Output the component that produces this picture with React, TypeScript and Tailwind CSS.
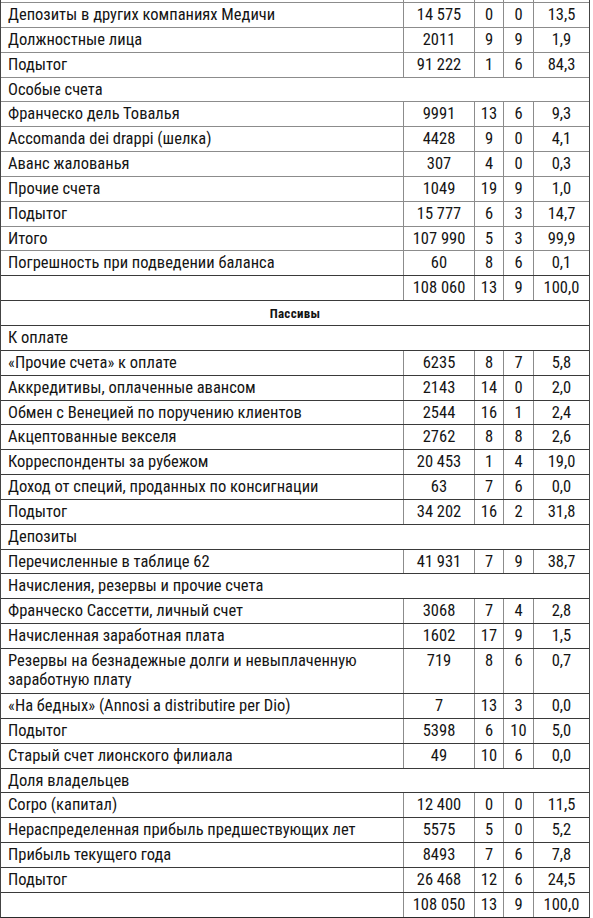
type Row =
  | { kind: 'item'; label: string; values: [string, string, string, string]; tall?: boolean }
  | { kind: 'section'; label: string }
  | { kind: 'header'; label: string };

const rows: Row[] = [
  { kind: 'item', label: 'Депозиты в других компаниях Медичи', values: ['14 575', '0', '0', '13,5'] },
  { kind: 'item', label: 'Должностные лица', values: ['2011', '9', '9', '1,9'] },
  { kind: 'item', label: 'Подытог', values: ['91 222', '1', '6', '84,3'] },
  { kind: 'section', label: 'Особые счета' },
  { kind: 'item', label: 'Франческо дель Товалья', values: ['9991', '13', '6', '9,3'] },
  { kind: 'item', label: 'Accomanda dei drappi (шелка)', values: ['4428', '9', '0', '4,1'] },
  { kind: 'item', label: 'Аванс жалованья', values: ['307', '4', '0', '0,3'] },
  { kind: 'item', label: 'Прочие счета', values: ['1049', '19', '9', '1,0'] },
  { kind: 'item', label: 'Подытог', values: ['15 777', '6', '3', '14,7'] },
  { kind: 'item', label: 'Итого', values: ['107 990', '5', '3', '99,9'] },
  { kind: 'item', label: 'Погрешность при подведении баланса', values: ['60', '8', '6', '0,1'] },
  { kind: 'item', label: '', values: ['108 060', '13', '9', '100,0'] },
  { kind: 'header', label: 'Пассивы' },
  { kind: 'section', label: 'К оплате' },
  { kind: 'item', label: '«Прочие счета» к оплате', values: ['6235', '8', '7', '5,8'] },
  { kind: 'item', label: 'Аккредитивы, оплаченные авансом', values: ['2143', '14', '0', '2,0'] },
  { kind: 'item', label: 'Обмен с Венецией по поручению клиентов', values: ['2544', '16', '1', '2,4'] },
  { kind: 'item', label: 'Акцептованные векселя', values: ['2762', '8', '8', '2,6'] },
  { kind: 'item', label: 'Корреспонденты за рубежом', values: ['20 453', '1', '4', '19,0'] },
  { kind: 'item', label: 'Доход от специй, проданных по консигнации', values: ['63', '7', '6', '0,0'] },
  { kind: 'item', label: 'Подытог', values: ['34 202', '16', '2', '31,8'] },
  { kind: 'section', label: 'Депозиты' },
  { kind: 'item', label: 'Перечисленные в таблице 62', values: ['41 931', '7', '9', '38,7'] },
  { kind: 'section', label: 'Начисления, резервы и прочие счета' },
  { kind: 'item', label: 'Франческо Сассетти, личный счет', values: ['3068', '7', '4', '2,8'] },
  { kind: 'item', label: 'Начисленная заработная плата', values: ['1602', '17', '9', '1,5'] },
  {
    kind: 'item',
    label: 'Резервы на безнадежные долги и невыплаченную заработную плату',
    values: ['719', '8', '6', '0,7'],
    tall: true,
  },
  { kind: 'item', label: '«На бедных» (Annosi a distributire per Dio)', values: ['7', '13', '3', '0,0'] },
  { kind: 'item', label: 'Подытог', values: ['5398', '6', '10', '5,0'] },
  { kind: 'item', label: 'Старый счет лионского филиала', values: ['49', '10', '6', '0,0'] },
  { kind: 'section', label: 'Доля владельцев' },
  { kind: 'item', label: 'Corpo (капитал)', values: ['12 400', '0', '0', '11,5'] },
  { kind: 'item', label: 'Нераспределенная прибыль предшествующих лет', values: ['5575', '5', '0', '5,2'] },
  { kind: 'item', label: 'Прибыль текущего года', values: ['8493', '7', '6', '7,8'] },
  { kind: 'item', label: 'Подытог', values: ['26 468', '12', '6', '24,5'] },
  { kind: 'item', label: '', values: ['108 050', '13', '9', '100,0'] },
];

const cols = 'grid grid-cols-[402px_71px_29px_30px_56px]';
const cell = 'border-l border-[#8c8c8c] text-center pt-[2px]';

export default function App() {
  return (
    <div className="w-[593px] min-h-[918px] bg-white text-[#141414] text-[16.5px] leading-[19px] font-[Roboto,sans-serif] [font-stretch:75%]">
      <div className="w-[590px] border-x border-[#444] border-b border-b-[#2a2a2a]">
        {/* хвост строки, обрезанной сверху */}
        <div className={`${cols} h-[2px]`}>
          <div />
          <div className="border-l border-[#8c8c8c]" />
          <div className="border-l border-[#8c8c8c]" />
          <div className="border-l border-[#8c8c8c]" />
          <div className="border-l border-[#8c8c8c]" />
        </div>

        {rows.map((row, i) => {
          const line = i < 11 ? 'border-[#8c8c8c]' : 'border-[#3a3a3a]';

          if (row.kind === 'header') {
            return (
              <div
                key={i}
                className={`border-t ${line} h-[24.85px] flex items-center justify-center text-[13px] font-bold tracking-[0.3px]`}
              >
                {row.label}
              </div>
            );
          }

          if (row.kind === 'section') {
            return (
              <div key={i} className={`border-t ${line} h-[24.85px] pl-[7px] pt-[2px]`}>
                {row.label}
              </div>
            );
          }

          return (
            <div key={i} className={`${cols} border-t ${line} ${row.tall ? 'h-[45.15px]' : 'h-[24.85px]'}`}>
              <div className="pl-[7px] pr-1 pt-[2px]">{row.label}</div>
              {row.values.map((v, j) => (
                <div key={j} className={cell}>
                  {v}
                </div>
              ))}
            </div>
          );
        })}
      </div>
    </div>
  );
}
